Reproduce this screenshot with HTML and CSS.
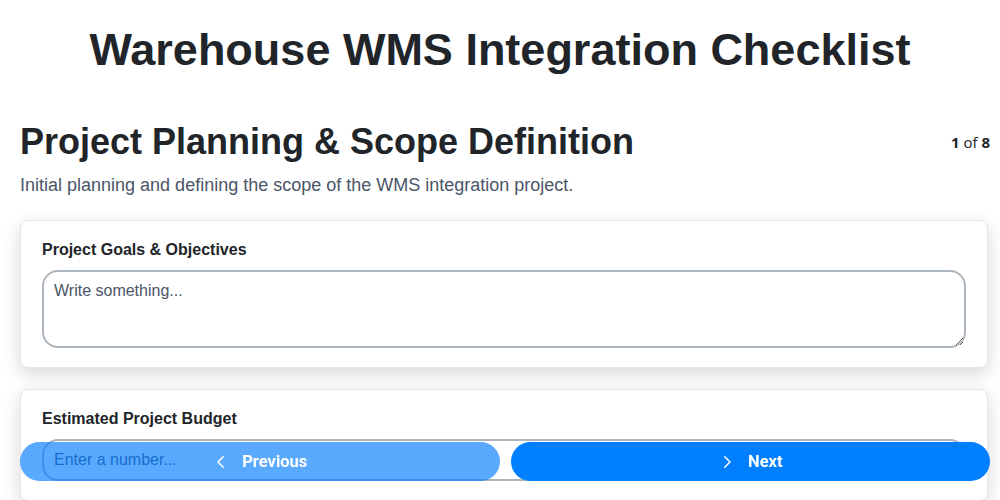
FILE: index.html
```html
<!DOCTYPE html>
<html lang="en">
<head>
    <meta charset="UTF-8">
    <title>Warehouse WMS Integration Checklist</title>
    <meta name="viewport" content="width=device-width, initial-scale=1">
    <link rel="stylesheet" href="styles.css">
</head>
<body>
    <h1>Warehouse WMS Integration Checklist</h1>
    <div class="container">
        <div class="step-head">
            <h2>Project Planning &amp; Scope Definition</h2>
            <div class="counter"><b>1</b> of <b>8</b></div>
        </div>
        <p class="step-desc">Initial planning and defining the scope of the WMS integration project.</p>

        <div class="card">
            <label for="goals">Project Goals &amp; Objectives</label>
            <textarea id="goals" placeholder="Write something..."></textarea>
        </div>
        <div class="card">
            <label for="budget">Estimated Project Budget</label>
            <input type="number" id="budget" placeholder="Enter a number...">
        </div>
    </div>

    <div class="nav">
        <button class="btn btn-prev" type="button">
            <svg viewBox="0 0 24 24" width="18" height="18"><path d="M15 5l-7 7 7 7" fill="none" stroke="currentColor" stroke-width="2" stroke-linecap="round" stroke-linejoin="round"/></svg>
            Previous
        </button>
        <button class="btn btn-next" type="button">
            <svg viewBox="0 0 24 24" width="18" height="18"><path d="M9 5l7 7-7 7" fill="none" stroke="currentColor" stroke-width="2" stroke-linecap="round" stroke-linejoin="round"/></svg>
            Next
        </button>
    </div>
</body>
</html>
```

FILE: styles.css
```css
body { font-family: "Liberation Sans", Arial, sans-serif; background: #fff; color: #212529; margin: 0; padding: 0; }
.container { padding: 0 10px 0 20px; }
h1 { text-align: center; font-size: 45px; margin: 0; padding: 24px 0 0; line-height: 52px; color: #212529; }
.step-head { display: flex; justify-content: space-between; align-items: center; margin-top: 44px; }
h2 { font-size: 36px; margin: 0; line-height: 44px; }
.counter { font-family: "Open Sans", sans-serif; font-size: 15px; color: #212529; }
.counter b { font-weight: 700; }
.step-desc { margin: 11px 0 24px; font-size: 18px; color: #4a5568; }
.card {
    background: #fff; border: 1px solid #e6e7eb; border-radius: 8px; padding: 20px 21px 19px; margin-right: 2px;
    box-shadow: 0 6px 18px rgba(0, 0, 0, 0.16); margin-bottom: 21px;
}
label { display: block; font-weight: 700; font-size: 16px; margin-bottom: 11px; color: #212529; }
textarea, input[type="number"] {
    display: block; width: 100%; box-sizing: border-box; font-family: "Liberation Sans", Arial, sans-serif;
    font-size: 16px; border: 2px solid #adb5bd; border-radius: 16px; padding: 10px 10px; color: #212529;
}
textarea { height: 78px; resize: vertical; }
input[type="number"] { height: 42px; }
textarea::placeholder, input::placeholder { color: #4a5568; }
.nav {
    position: fixed; left: 20px; right: 10px; bottom: 19px; display: flex; gap: 11px;
}
.btn {
    flex: 1; height: 39px; border: none; border-radius: 20px; color: #fff; font-family: Roboto, sans-serif;
    font-weight: 700; font-size: 16.5px; display: flex; align-items: center; justify-content: center; gap: 12px; cursor: pointer;
}
.btn-prev { background: rgba(0, 123, 255, 0.65); }
.btn-next { background: #0080ff; }
```
